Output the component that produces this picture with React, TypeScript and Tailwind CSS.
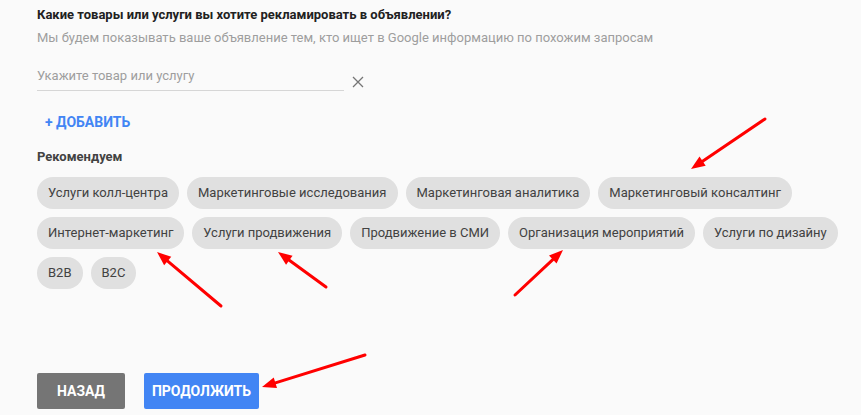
const rows = [
  ["Услуги колл-центра", "Маркетинговые исследования", "Маркетинговая аналитика", "Маркетинговый консалтинг"],
  ["Интернет-маркетинг", "Услуги продвижения", "Продвижение в СМИ", "Организация мероприятий", "Услуги по дизайну"],
  ["B2B", "B2C"],
]

function Chip({ label }: { label: string }) {
  return (
    <button className="h-[32px] rounded-full bg-[#e0e0e0] px-[11px] text-[13px] text-[#424242]">
      {label}
    </button>
  )
}

// red annotation arrows drawn over the page
const arrows = [
  { x1: 765, y1: 119, x2: 691, y2: 169 },
  { x1: 221, y1: 306, x2: 157, y2: 252 },
  { x1: 326, y1: 287, x2: 278, y2: 252 },
  { x1: 515, y1: 295, x2: 563, y2: 250 },
  { x1: 365, y1: 355, x2: 262, y2: 387 },
]

function Arrows() {
  return (
    <svg className="pointer-events-none absolute inset-0" width="861" height="415">
      {arrows.map((a, i) => {
        const ang = Math.atan2(a.y2 - a.y1, a.x2 - a.x1)
        const L = 14
        const W = 5.5
        const bx = a.x2 - L * Math.cos(ang)
        const by = a.y2 - L * Math.sin(ang)
        const px = -Math.sin(ang) * W
        const py = Math.cos(ang) * W
        return (
          <g key={i}>
            <line x1={a.x1} y1={a.y1} x2={bx} y2={by} stroke="#ff0000" strokeWidth="3" strokeLinecap="round" />
            <polygon points={`${a.x2},${a.y2} ${bx + px},${by + py} ${bx - px},${by - py}`} fill="#ff0000" />
          </g>
        )
      })}
    </svg>
  )
}

export default function App() {
  return (
    <div className="relative h-[415px] w-[861px] overflow-hidden bg-[#fafafa] font-['Roboto',sans-serif]">
      <div className="pl-[37px] pt-[6px]">
        <h2 className="text-[13px] font-bold leading-[18px] text-[#212121]">
          Какие товары или услуги вы хотите рекламировать в объявлении?
        </h2>
        <p className="mt-[5px] text-[13px] leading-[18px] text-[#9e9e9e]">
          Мы будем показывать ваше объявление тем, кто ищет в Google информацию по похожим запросам
        </p>

        <div className="mt-[20px] flex items-end">
          <div className="w-[307px] border-b border-[#d6d6d6] pb-[5px] text-[13px] leading-[18px] text-[#9e9e9e]">
            Укажите товар или услугу
          </div>
          <svg className="mb-[3px] ml-[8px]" width="12" height="12" viewBox="0 0 12 12">
            <path d="M1 1L11 11M11 1L1 11" stroke="#757575" strokeWidth="1.3" />
          </svg>
        </div>

        <div className="mt-[22px] pl-[8px] text-[14px] font-bold leading-[18px] text-[#4285f4]">+ ДОБАВИТЬ</div>

        <div className="mt-[17px] text-[13px] font-bold leading-[18px] text-[#424242]">Рекомендуем</div>

        <div className="mt-[11px] flex flex-col gap-[8px]">
          {rows.map((r, i) => (
            <div key={i} className="flex gap-[8px]">
              {r.map((c) => (
                <Chip key={c} label={c} />
              ))}
            </div>
          ))}
        </div>

        <div className="mt-[84px] flex gap-[19px]">
          <button className="h-[36px] w-[88px] rounded-[2px] bg-[#757575] text-[14px] font-bold text-white">НАЗАД</button>
          <button className="h-[36px] w-[115px] rounded-[2px] bg-[#4285f4] text-[14px] font-bold text-white">ПРОДОЛЖИТЬ</button>
        </div>
      </div>
      <Arrows />
    </div>
  )
}
